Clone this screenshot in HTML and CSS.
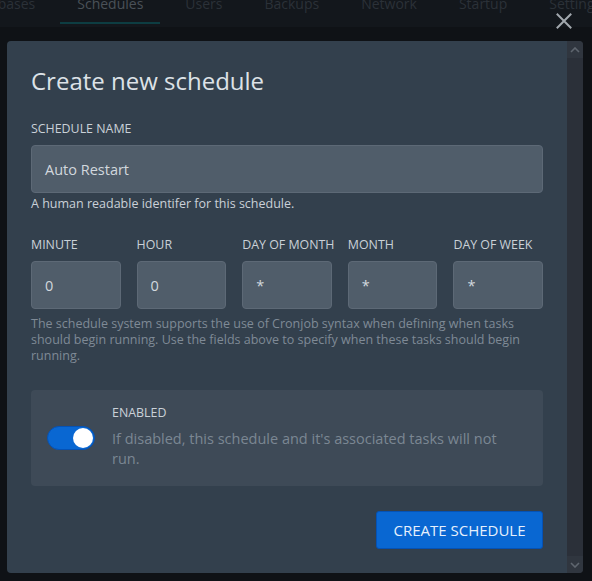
FILE: index.html
```html
<!DOCTYPE html>
<html lang="en">
<head>
<meta charset="utf-8">
<title>Create new schedule</title>
<link rel="stylesheet" href="styles.css">
</head>
<body>
<nav class="topnav">
  <div class="tabs">
    <span class="tab">Databases</span>
    <span class="tab active">Schedules</span>
    <span class="tab">Users</span>
    <span class="tab">Backups</span>
    <span class="tab">Network</span>
    <span class="tab">Startup</span>
    <span class="tab">Settings</span>
  </div>
</nav>
<button class="close" aria-label="Close">
  <svg viewBox="0 0 16 16" width="16" height="16"><path d="M1.5 1.5 L14.5 14.5 M14.5 1.5 L1.5 14.5" stroke="currentColor" stroke-width="2" fill="none" stroke-linecap="square"/></svg>
</button>
<div class="modal-wrap">
  <div class="modal">
    <div class="modal-body">
      <h2 class="title">Create new schedule</h2>
      <div class="field">
        <label class="label">Schedule name</label>
        <div class="input wide">Auto Restart</div>
        <p class="hint">A human readable identifer for this schedule.</p>
      </div>
      <div class="cron">
        <div class="cron-col"><label class="label">Minute</label><div class="input">0</div></div>
        <div class="cron-col"><label class="label">Hour</label><div class="input">0</div></div>
        <div class="cron-col"><label class="label">Day of month</label><div class="input">*</div></div>
        <div class="cron-col"><label class="label">Month</label><div class="input">*</div></div>
        <div class="cron-col"><label class="label">Day of week</label><div class="input">*</div></div>
      </div>
      <p class="cron-help">The schedule system supports the use of Cronjob syntax when defining when tasks should begin running. Use the fields above to specify when these tasks should begin running.</p>
      <div class="enabled-box">
        <div class="toggle"><span class="knob"></span></div>
        <div class="enabled-text">
          <div class="label enabled-label">Enabled</div>
          <p class="enabled-desc">If disabled, this schedule and it's associated tasks will not run.</p>
        </div>
      </div>
      <div class="actions">
        <button class="btn">Create Schedule</button>
      </div>
    </div>
    <div class="scrollbar">
      <span class="arrow up"><svg viewBox="0 0 10 6" width="10" height="6"><path d="M1 5 L5 1 L9 5" stroke="currentColor" stroke-width="1.6" fill="none"/></svg></span>
      <span class="track"></span>
      <span class="arrow down"><svg viewBox="0 0 10 6" width="10" height="6"><path d="M1 1 L5 5 L9 1" stroke="currentColor" stroke-width="1.6" fill="none"/></svg></span>
    </div>
  </div>
</div>
</body>
</html>
```
FILE: styles.css
```css
* { box-sizing: border-box; }
html, body { margin: 0; padding: 0; }
body {
  background: #0f1216;
  font-family: "Open Sans", "Noto Sans", sans-serif;
  width: 592px;
  height: 581px;
  overflow: hidden;
  position: relative;
}
.topnav {
  height: 27px;
  background: #13171c;
  overflow: hidden;
}
.tabs {
  display: flex;
  margin-left: -50px;
  margin-top: -6px;
  gap: 8px;
}
.tab {
  font-size: 14px;
  line-height: 20px;
  padding: 0 17px 8px;
  color: #2b3138;
  white-space: nowrap;
  border-bottom: 2px solid transparent;
}
.tab.active {
  color: #4a5158;
  border-bottom-color: #0d3d42;
}
.close {
  position: absolute;
  left: 556px;
  top: 13px;
  width: 16px;
  height: 16px;
  padding: 0;
  border: 0;
  background: none;
  color: #a2a8ae;
  display: block;
}
.close svg { display: block; }
.modal-wrap {
  padding: 14px 9px 0 7px;
}
.modal {
  display: flex;
  height: 532px;
  border-radius: 4px;
  overflow: hidden;
}
.modal-body {
  flex: 1;
  background: #33404d;
  padding: 24px;
}
.scrollbar {
  width: 16px;
  background: #2b3039;
  display: flex;
  flex-direction: column;
}
.arrow {
  height: 17px;
  display: flex;
  align-items: center;
  justify-content: center;
  background: #30363f;
  color: #5f666f;
}
.track { flex: 1; }
.title {
  margin: 0;
  font-size: 24px;
  line-height: 32px;
  font-weight: 500;
  color: #dde2e7;
}
.field { margin-top: 24px; }
.label {
  display: block;
  font-size: 12.4px;
  line-height: 16px;
  text-transform: uppercase;
  color: #cad1d8;
  white-space: nowrap;
}
.input {
  margin-top: 8px;
  height: 48px;
  background: #505d6a;
  border: 1px solid #5d6976;
  border-radius: 4px;
  padding: 0 13px;
  display: flex;
  align-items: center;
  font-size: 14.5px;
  color: #d2d8de;
}
.hint {
  margin: 3px 0 0;
  font-size: 12.5px;
  line-height: 16px;
  color: #cad1d8;
}
.cron {
  margin-top: 25px;
  display: grid;
  grid-template-columns: repeat(5, minmax(0, 1fr));
  gap: 16px;
}
.cron-col { min-width: 0; }
.cron .input { margin-top: 8px; }
.cron-help {
  margin: 7px 0 0;
  font-size: 12.5px;
  line-height: 16px;
  color: #7f8a96;
}
.enabled-box {
  margin-top: 26px;
  background: #3e4a57;
  border-radius: 4px;
  padding: 14px 24px 16px 16px;
  display: flex;
  align-items: center;
  gap: 17px;
  height: 96px;
}
.toggle {
  width: 48px;
  height: 24px;
  border-radius: 12px;
  background: #0967d2;
  border: 1px solid #0552b5;
  position: relative;
  flex: none;
  margin-top: 2px;
}
.knob {
  position: absolute;
  right: 1px;
  top: 1px;
  width: 20px;
  height: 20px;
  border-radius: 50%;
  background: #fff;
}
.enabled-text { flex: 1; }
.enabled-label { color: #cad1d8; }
.enabled-desc {
  margin: 8px 0 0;
  font-size: 14.5px;
  line-height: 20px;
  color: #7b8793;
}
.actions {
  margin-top: 25px;
  display: flex;
  justify-content: flex-end;
}
.btn {
  height: 38px;
  width: 167px;
  background: #0967d2;
  border: 1px solid #0552b5;
  border-radius: 3px;
  color: #e6f0fc;
  font-family: inherit;
  font-size: 15px;
  font-weight: 500;
  text-transform: uppercase;
  padding: 0;
}
```
